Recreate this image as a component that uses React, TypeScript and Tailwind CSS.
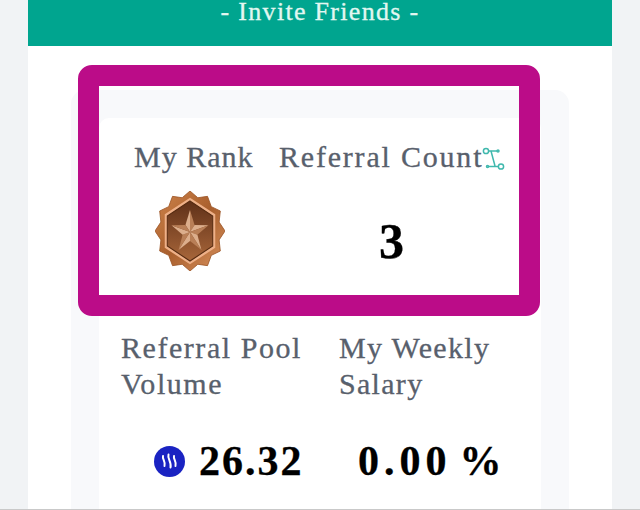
const serif = "font-['Liberation_Serif',serif]";

function Medal() {
  // twelve-point scalloped rim around a hexagon
  const rim: string[] = [];
  for (let i = 0; i < 24; i++) {
    const a = ((i * 15 - 90) * Math.PI) / 180;
    const r = i % 2 === 0 ? 36 : 31;
    rim.push(`${36 + r * Math.cos(a)},${36 + r * Math.sin(a)}`);
  }
  const hex = (r: number) =>
    [0, 1, 2, 3, 4, 5]
      .map((i) => {
        const a = ((i * 60 - 90) * Math.PI) / 180;
        return `${36 + r * Math.cos(a)},${36 + r * Math.sin(a)}`;
      })
      .join(' ');
  const pt = (deg: number, r: number) => {
    const a = ((deg - 90) * Math.PI) / 180;
    return `${36 + r * Math.cos(a)},${37 + r * Math.sin(a)}`;
  };
  return (
    <svg width="70" height="80" viewBox="0 0 72 72" preserveAspectRatio="none">
      <defs>
        <linearGradient id="rim" x1="0" y1="0" x2="1" y2="1">
          <stop offset="0" stopColor="#d0854c" />
          <stop offset="0.5" stopColor="#a95f2d" />
          <stop offset="1" stopColor="#d9935f" />
        </linearGradient>
        <linearGradient id="face" x1="0" y1="0" x2="0" y2="1">
          <stop offset="0" stopColor="#5f3018" />
          <stop offset="1" stopColor="#a8663a" />
        </linearGradient>
      </defs>
      <polygon points={rim.join(' ')} fill="url(#rim)" stroke="#9c5526" strokeWidth="0.8" strokeLinejoin="round" />
      <polygon points={hex(30)} fill="#eeb088" />
      <polygon points={hex(27)} fill="url(#face)" stroke="#54290f" strokeWidth="1" />
      {[0, 72, 144, 216, 288].map((d) => (
        <g key={d}>
          <polygon points={`36,37 ${pt(d, 20)} ${pt(d - 36, 8)}`} fill="#dcae8c" />
          <polygon points={`36,37 ${pt(d, 20)} ${pt(d + 36, 8)}`} fill="#b97f57" />
        </g>
      ))}
    </svg>
  );
}

function ReferralIcon() {
  return (
    <svg width="24" height="24" viewBox="0 0 24 24" fill="none" stroke="#3fb8ad" strokeWidth="1.5" className="mt-[8px] shrink-0">
      <circle cx="4" cy="4" r="2.6" />
      <path d="M6.600 4H15" />
      <circle cx="16" cy="4" r="1" />
      <path d="M9 4L13 19" />
      <path d="M6 19.500H16.500" />
      <circle cx="5.500" cy="19.500" r="1" />
      <circle cx="19" cy="19.500" r="2.6" />
    </svg>
  );
}

function SteemIcon() {
  return (
    <svg width="31" height="31" viewBox="0 0 31 31" className="shrink-0">
      <circle cx="15.500" cy="15.500" r="15.500" fill="#1a23c2" />
      <g fill="none" stroke="#fff" strokeWidth="2" strokeLinecap="round">
        <path d="M9 10c-1 3 3 6 1.500 10" />
        <path d="M14.500 8.500c-1.500 4 3.500 8 2 13" />
        <path d="M20 10c-1 3 3 6 1.500 10" />
      </g>
    </svg>
  );
}

export default function App() {
  return (
    <div className={`relative flex h-[510px] w-[640px] justify-center overflow-hidden bg-[#f1f3f5] ${serif}`}>
      <div className="flex w-[584px] flex-col bg-white">
        <div className="flex h-[46px] shrink-0 justify-center bg-[#00a58f] text-[26px] leading-[24px] tracking-[1.300px] text-[#e2f7f1] [-webkit-text-stroke:0.3px]">
          - Invite Friends -
        </div>

        <div className="ml-[43px] mt-[44px] flex w-[498px] flex-1 flex-col rounded-t-[14px] bg-[#f8f9fb] px-[28px] pt-[28px]">
          <div className="flex flex-1 flex-col rounded-t-[10px] bg-white text-[30px] leading-[36px] tracking-[1.300px] text-[#58606c] [-webkit-text-stroke:0.3px]">
            <div className="flex pl-[35px] pt-[21px]">
              <div className="flex w-[145px] flex-col items-start">
                <span className="whitespace-nowrap tracking-[1px]">My Rank</span>
                <div className="ml-[21px] mt-[16px]">
                  <Medal />
                </div>
              </div>
              <div className="flex flex-col">
                <div className="flex items-start whitespace-nowrap">
                  <span className="mr-[-1px] tracking-[1.800px]">Referral Count</span>
                  <ReferralIcon />
                </div>
                <span className="ml-[100px] mt-[42px] text-[50px] font-bold leading-[48px] text-black">3</span>
              </div>
            </div>

            <div className="flex pl-[22px] pt-[59px]">
              <div className="w-[218px] tracking-[1.550px]">
                Referral Pool
                <br />
                Volume
              </div>
              <div>
                My Weekly
                <br />
                Salary
              </div>
            </div>

            <div className="flex pt-[35px] text-[42px] font-bold leading-[48px] text-black">
              <div className="ml-[55px] flex w-[204px] items-center gap-[14px]">
                <SteemIcon />
                <span className="tracking-[2px]">26.32</span>
              </div>
              <div className="flex gap-[8px] whitespace-nowrap">
                <span className="tracking-[5px]">0.00</span>
                <span className="tracking-normal">%</span>
              </div>
            </div>
          </div>
        </div>
      </div>

      {/* highlight box drawn over the screenshot */}
      <div className="absolute left-[78px] top-[65px] h-[251px] w-[462px] rounded-[14px] border-[21px] border-[#bb0c88]" />
      <div className="absolute bottom-0 left-0 h-px w-full bg-[#c9c9c9]" />
    </div>
  );
}
